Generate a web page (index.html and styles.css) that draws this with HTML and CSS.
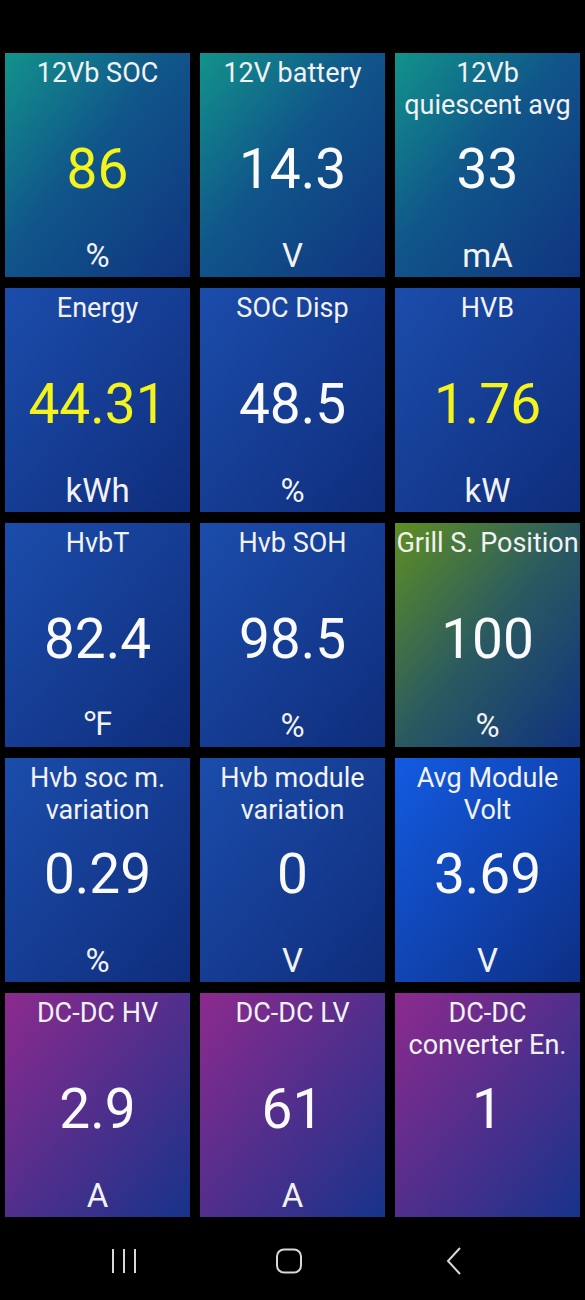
FILE: index.html
```html
<!DOCTYPE html>
<html lang="en">
<head>
  <meta charset="UTF-8">
  <title>Gauges</title>
  <link rel="stylesheet" href="styles.css">
</head>
<body>
  <div id="grid">
    <div class="tile teal">
      <div class="label">12Vb SOC</div>
      <div class="value hi">86</div>
      <div class="unit">%</div>
    </div>
    <div class="tile teal">
      <div class="label">12V battery</div>
      <div class="value">14.3</div>
      <div class="unit">V</div>
    </div>
    <div class="tile teal">
      <div class="label">12Vb<br>quiescent avg</div>
      <div class="value">33</div>
      <div class="unit">mA</div>
    </div>

    <div class="tile blue">
      <div class="label">Energy</div>
      <div class="value hi">44.31</div>
      <div class="unit">kWh</div>
    </div>
    <div class="tile blue">
      <div class="label">SOC Disp</div>
      <div class="value">48.5</div>
      <div class="unit">%</div>
    </div>
    <div class="tile blue">
      <div class="label">HVB</div>
      <div class="value hi">1.76</div>
      <div class="unit">kW</div>
    </div>

    <div class="tile blue">
      <div class="label">HvbT</div>
      <div class="value">82.4</div>
      <div class="unit">℉</div>
    </div>
    <div class="tile blue">
      <div class="label">Hvb SOH</div>
      <div class="value">98.5</div>
      <div class="unit">%</div>
    </div>
    <div class="tile olive">
      <div class="label">Grill S. Position</div>
      <div class="value">100</div>
      <div class="unit">%</div>
    </div>

    <div class="tile blue">
      <div class="label">Hvb soc m.<br>variation</div>
      <div class="value">0.29</div>
      <div class="unit">%</div>
    </div>
    <div class="tile blue">
      <div class="label">Hvb module<br>variation</div>
      <div class="value">0</div>
      <div class="unit">V</div>
    </div>
    <div class="tile bright">
      <div class="label">Avg Module<br>Volt</div>
      <div class="value">3.69</div>
      <div class="unit">V</div>
    </div>

    <div class="tile purple">
      <div class="label">DC-DC HV</div>
      <div class="value">2.9</div>
      <div class="unit">A</div>
    </div>
    <div class="tile purple">
      <div class="label">DC-DC LV</div>
      <div class="value">61</div>
      <div class="unit">A</div>
    </div>
    <div class="tile purple">
      <div class="label">DC-DC<br>converter En.</div>
      <div class="value">1</div>
      <div class="unit"></div>
    </div>
  </div>

  <nav id="navbar">
    <div class="navbtn">
      <svg width="30" height="26" viewBox="0 0 30 26">
        <path d="M4 1v24M15 1v24M26 1v24" stroke="#d8d8d8" stroke-width="2" fill="none"/>
      </svg>
    </div>
    <div class="navbtn">
      <svg width="28" height="26" viewBox="0 0 28 26">
        <rect x="2" y="1.5" width="24" height="23" rx="7" stroke="#d8d8d8" stroke-width="2" fill="none"/>
      </svg>
    </div>
    <div class="navbtn">
      <svg width="20" height="28" viewBox="0 0 20 28">
        <path d="M16 1L4 14l12 13" stroke="#d8d8d8" stroke-width="2" fill="none"/>
      </svg>
    </div>
  </nav>
</body>
</html>
```

FILE: styles.css
```css
body {
  margin: 0;
  background-color: #000;
  color: #f2f2f2;
  font-family: Roboto, "Noto Sans", sans-serif;
}
#grid {
  display: grid;
  grid-template-columns: repeat(3, 185px);
  grid-auto-rows: 224px;
  column-gap: 10px;
  row-gap: 11px;
  padding: 53px 5px 0 5px;
}
.tile {
  display: grid;
  grid-template: 1fr / 1fr;
  padding: 4px 0 2px 0;
  text-align: center;
  overflow: hidden;
}
.tile > div {
  grid-area: 1 / 1;
}
.teal {
  background: linear-gradient(to bottom right, #12938b, #10568a 45%, #10347f);
}
.blue {
  background: linear-gradient(to bottom right, #1b4dab, #0f2d7c);
}
.bright {
  background: linear-gradient(to bottom right, #135be2, #0d2f85);
}
.olive {
  background: linear-gradient(to bottom right, #5f8f22, #2a5a60 50%, #10327f);
}
.purple {
  background: linear-gradient(to bottom right, #8d2a8e, #17338a);
}
.label {
  align-self: start;
  font-size: 27px;
  white-space: nowrap;
}
.value {
  align-self: center;
  font-size: 55px;
  margin-top: 5px;
  color: #fafafa;
}
.value.hi {
  color: #f4f41c;
}
.unit {
  align-self: end;
  font-size: 33px;
}
#navbar {
  display: flex;
  justify-content: center;
  align-items: center;
  gap: 125px;
  margin-top: 30px;
  padding-right: 8px;
}
.navbtn {
  width: 40px;
  height: 28px;
  display: flex;
  justify-content: center;
  align-items: center;
}
```
